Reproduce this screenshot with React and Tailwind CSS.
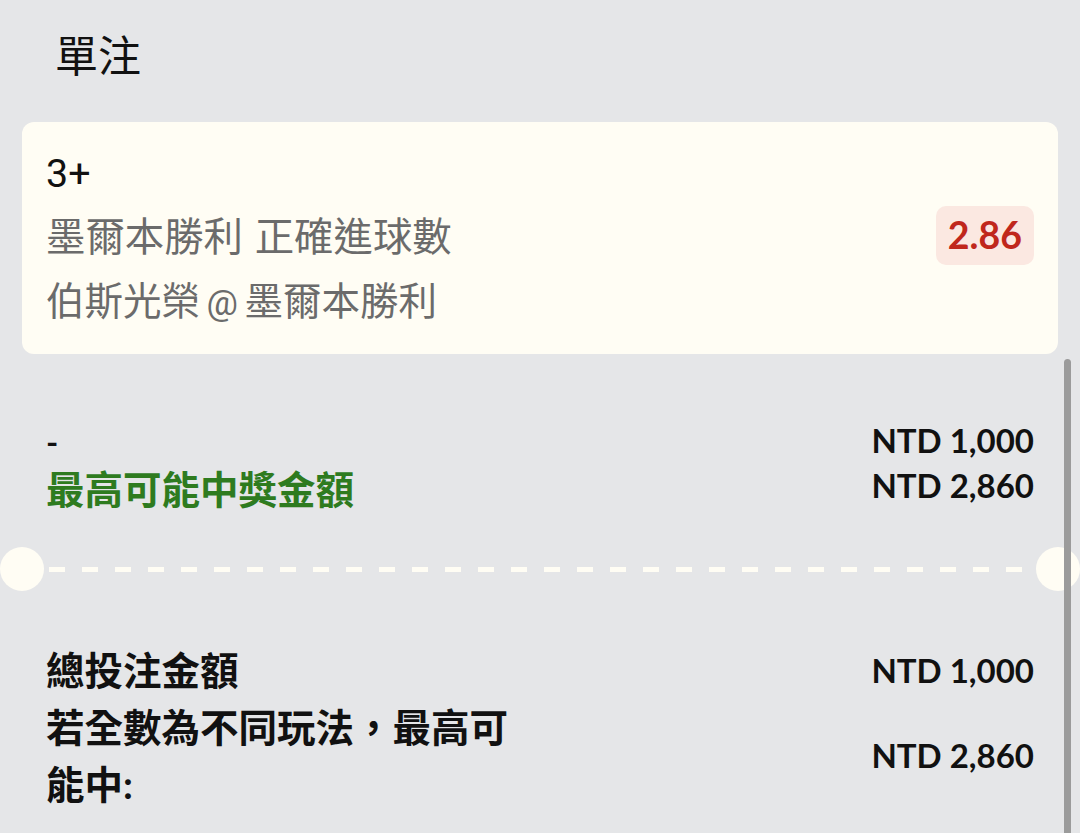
import React from 'react';

const FONT = "font-['Lato','Noto_Sans_CJK_TC',sans-serif]";
const SYS = "font-['Roboto','Noto_Sans_CJK_TC',sans-serif]";

function Row({ left, right, className = '' }) {
  return (
    <div className={`flex items-center justify-between ${className}`}>
      <div className="w-1/2">{left}</div>
      <div className="text-[33px] font-bold text-[#111] whitespace-nowrap">{right}</div>
    </div>
  );
}

function Divider() {
  return (
    <div className="flex items-center h-[44px]">
      <div className="w-[44px] h-[44px] rounded-full bg-[#fffdf4] shrink-0" />
      <div className="flex-1 mx-[5px] h-[5px] bg-[repeating-linear-gradient(90deg,#fffdf4_0_16px,transparent_16px_33px)]" />
      <div className="w-[44px] h-[44px] rounded-full bg-[#fffdf4] shrink-0" />
    </div>
  );
}

export default function App() {
  return (
    <div className={`${FONT} relative w-[1080px] h-[833px] overflow-hidden bg-[#e5e6e8] text-[#111]`}>
      {/* header */}
      <div className={`${SYS} pt-[27px] pl-[55px] text-[43px] leading-[60px]`}>單注</div>

      {/* selection card */}
      <div className="mx-[22px] mt-[35px] rounded-[12px] bg-[#fffdf4] px-6 pt-[20px] pb-[18px] flex items-center justify-between">
        <div className={`${SYS} text-[39.4px] leading-[64px]`}>
          <div className="text-[#111]">3+</div>
          <div className="text-[#6b6b6b] [word-spacing:2px]">墨爾本勝利 正確進球數</div>
          <div className="text-[#6b6b6b] text-[38.5px] [word-spacing:-3px]">
            伯斯光榮 <span className="text-[35px]">@</span> 墨爾本勝利
          </div>
        </div>
        <div className="h-[59px] px-[12px] rounded-[10px] bg-[#fbe8e1] flex items-center text-[37.5px] font-bold text-[#c0271c] -mt-[8px]">
          2.86
        </div>
      </div>

      {/* bet summary */}
      <div className="mx-[22px] px-6 mt-[63px] flex justify-between font-bold">
        <div className="flex flex-col">
          <div className="h-[48px] leading-[48px] text-[33px]">-</div>
          <div className="h-[48px] leading-[48px] text-[38.5px] text-[#2e7b1f] whitespace-nowrap">最高可能中獎金額</div>
        </div>
        <div className="flex flex-col items-end pt-[1px] text-[33px]">
          <div className="h-[45px] leading-[45px]">NTD 1,000</div>
          <div className="h-[45px] leading-[45px]">NTD 2,860</div>
        </div>
      </div>

      <div className="mt-[34px]">
        <Divider />
      </div>

      {/* totals */}
      <div className="mx-[22px] px-6 mt-[51px]">
        <Row
          left={<div className="text-[38.5px] leading-[57px] font-bold">總投注金額</div>}
          right="NTD 1,000"
        />
        <Row
          left={<div className="text-[38.5px] leading-[57px] font-bold">若全數為不同玩法，最高可能中:</div>}
          right="NTD 2,860"
        />
      </div>

      {/* scrollbar */}
      <div className="absolute left-[1064px] top-[359px] w-[7px] h-[520px] rounded-full bg-[#9b9b9b]" />
    </div>
  );
}
